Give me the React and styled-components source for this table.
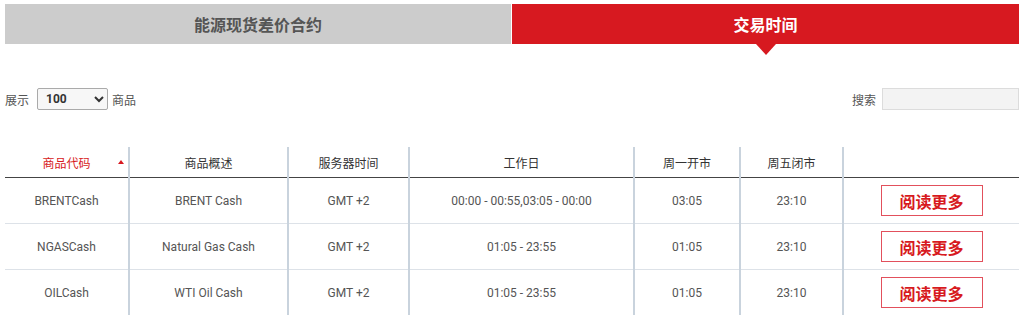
import React from "react";
import styled, { createGlobalStyle } from "styled-components";

const Global = createGlobalStyle`
  html, body { margin: 0; padding: 0; background: #fff; }
  body { font-family: Roboto, "Noto Sans CJK SC", sans-serif; color: #555; }
`;

const Page = styled.div`
  padding: 4px 5px 0 5px;
  width: 1014px;
`;

const Tabs = styled.div`
  display: grid;
  grid-template-columns: 506px 507px;
  column-gap: 1px;
`;

const Tab = styled.div`
  position: relative;
  height: 40px;
  display: flex;
  align-items: center;
  justify-content: center;
  font-family: "Noto Sans CJK SC", sans-serif;
  font-weight: 700;
  font-size: 16px;
  background: ${(p) => (p.$active ? "#d71920" : "#cccccc")};
  color: ${(p) => (p.$active ? "#fff" : "#555")};
  ${(p) =>
    p.$active &&
    `&::after {
      content: "";
      position: absolute;
      left: 50%;
      bottom: -11px;
      transform: translateX(-50%);
      border-left: 10px solid transparent;
      border-right: 10px solid transparent;
      border-top: 11px solid #d71920;
    }`}
`;

const Controls = styled.div`
  display: flex;
  justify-content: space-between;
  align-items: center;
  margin-top: 44px;
  height: 22px;
  font-size: 12px;
  font-family: "Noto Sans CJK SC", sans-serif;
  color: #555;
`;

const Group = styled.div`
  display: flex;
  align-items: center;
  gap: 4px;
`;

const Select = styled.select`
  width: 71px;
  height: 22px;
  margin-left: 4px;
  font-family: Roboto, sans-serif;
  font-weight: 700;
  font-size: 12px;
  color: #333;
  border: 1px solid #aaa;
  border-radius: 2px;
  background: #f7f7f7;
  padding: 0 4px;
`;

const Search = styled.input`
  width: 137px;
  height: 22px;
  box-sizing: border-box;
  margin-left: 2px;
  border: 1px solid #dcdcdc;
  background: #f3f3f3;
`;

const Table = styled.table`
  margin-top: 37px;
  width: 1014px;
  border-collapse: collapse;
  table-layout: fixed;
  font-size: 12px;
`;

const Th = styled.th`
  position: relative;
  height: 30px;
  padding: 0;
  font-family: "Noto Sans CJK SC", sans-serif;
  font-weight: 400;
  font-size: 12px;
  color: ${(p) => (p.$sorted ? "#d71920" : "#333")};
  border-bottom: 1px solid #444;
  border-left: ${(p) => (p.$first ? "none" : "2px solid #c9d3dd")};
  text-align: center;
`;

const SortArrow = styled.span`
  position: absolute;
  right: 4px;
  top: 13px;
  border-left: 3px solid transparent;
  border-right: 3px solid transparent;
  border-bottom: 4px solid #d71920;
`;

const Td = styled.td`
  height: 45px;
  padding: 0;
  text-align: center;
  color: #555;
  font-family: Roboto, sans-serif;
  border-left: ${(p) => (p.$first ? "none" : "2px solid #c9d3dd")};
  border-bottom: ${(p) => (p.$last ? "none" : "1px solid #dde2e8")};
`;

const MoreButton = styled.span`
  display: inline-flex;
  align-items: center;
  justify-content: center;
  box-sizing: border-box;
  width: 102px;
  height: 31px;
  border: 1px solid #e2505c;
  color: #d71920;
  font-family: "Noto Sans CJK SC", sans-serif;
  font-weight: 700;
  font-size: 16px;
`;

const columns = [
  { label: "商品代码", w: 124, sorted: true },
  { label: "商品概述", w: 159 },
  { label: "服务器时间", w: 121 },
  { label: "工作日", w: 225 },
  { label: "周一开市", w: 106 },
  { label: "周五闭市", w: 103 },
  { label: "", w: 176 },
];

const rows = [
  ["BRENTCash", "BRENT Cash", "GMT +2", "00:00 - 00:55,03:05 - 00:00", "03:05", "23:10"],
  ["NGASCash", "Natural Gas Cash", "GMT +2", "01:05 - 23:55", "01:05", "23:10"],
  ["OILCash", "WTI Oil Cash", "GMT +2", "01:05 - 23:55", "01:05", "23:10"],
];

export default function App() {
  return (
    <>
      <Global />
      <Page>
        <Tabs>
          <Tab>能源现货差价合约</Tab>
          <Tab $active>交易时间</Tab>
        </Tabs>
        <Controls>
          <Group>
            <span>展示</span>
            <Select defaultValue="100">
              <option value="10">10</option>
              <option value="25">25</option>
              <option value="50">50</option>
              <option value="100">100</option>
            </Select>
            <span>商品</span>
          </Group>
          <Group>
            <span>搜索</span>
            <Search type="text" />
          </Group>
        </Controls>
        <Table>
          <colgroup>
            {columns.map((c, i) => (
              <col key={i} style={{ width: c.w }} />
            ))}
          </colgroup>
          <thead>
            <tr>
              {columns.map((c, i) => (
                <Th key={i} $first={i === 0} $sorted={c.sorted}>
                  {c.label}
                  {c.sorted && <SortArrow />}
                </Th>
              ))}
            </tr>
          </thead>
          <tbody>
            {rows.map((r, ri) => (
              <tr key={ri}>
                {r.map((cell, ci) => (
                  <Td key={ci} $first={ci === 0} $last={ri === rows.length - 1}>
                    {cell}
                  </Td>
                ))}
                <Td $last={ri === rows.length - 1}>
                  <MoreButton>阅读更多</MoreButton>
                </Td>
              </tr>
            ))}
          </tbody>
        </Table>
      </Page>
    </>
  );
}
